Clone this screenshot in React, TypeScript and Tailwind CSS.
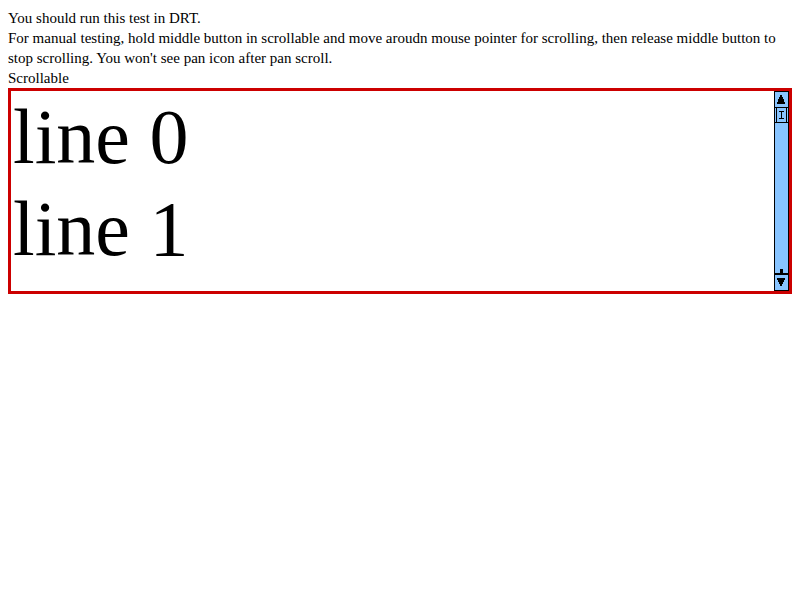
import { useRef } from "react";

const lines = ["line 0", "line 1"];

export default function App() {
  const scroller = useRef<HTMLDivElement>(null);
  const scrollBy = (top: number) => scroller.current?.scrollBy({ top });

  return (
    <main className="p-2 font-['Liberation_Serif',serif] text-[15px] leading-5 text-black">
      <p>You should run this test in DRT.</p>
      <p>
        For manual testing, hold middle button in scrollable and move aroudn mouse pointer for
        scrolling, then release middle button to stop scrolling. You won't see pan icon after pan scroll.
      </p>
      <p>Scrollable</p>
      <div className="flex h-[206px] border-3 border-[#cc0000]">
        <div ref={scroller} className="grow overflow-hidden px-0.5 text-[78px] leading-[92px]">
          {lines.map((line) => (
            <p key={line}>{line}</p>
          ))}
        </div>
        <div className="flex w-[15px] shrink-0 flex-col border border-black bg-[#88c4ff]">
          <button type="button" aria-label="Scroll up" className="h-4 border-b border-black" onClick={() => scrollBy(-40)}>
            <svg viewBox="0 0 13 15" className="block h-[15px] w-[13px]" shapeRendering="crispEdges">
              <path d="M5 3h2v2h1v2h1v3h1v2H2v-2h1V7h1V5h1z" />
            </svg>
          </button>
          <svg viewBox="0 0 13 15" className="block h-[15px] w-[13px]" shapeRendering="crispEdges">
            <path d="M1 0h1v14H1zM11 0h1v14h-1zM0 14h13v1H0zM4 3h5v1H7v6h2v1H4v-1h2V4H4z" />
          </svg>
          <div className="grow" />
          <button type="button" aria-label="Scroll down" className="h-[22px]" onClick={() => scrollBy(40)}>
            <svg viewBox="0 0 13 22" className="block h-[22px] w-[13px]" shapeRendering="crispEdges">
              <path d="M5 1h3v4h5v2H0V5h5zM2 10h8v2H9v2H8v2H7v2H5v-2H4v-2H3v-2H2z" />
            </svg>
          </button>
        </div>
      </div>
    </main>
  );
}
